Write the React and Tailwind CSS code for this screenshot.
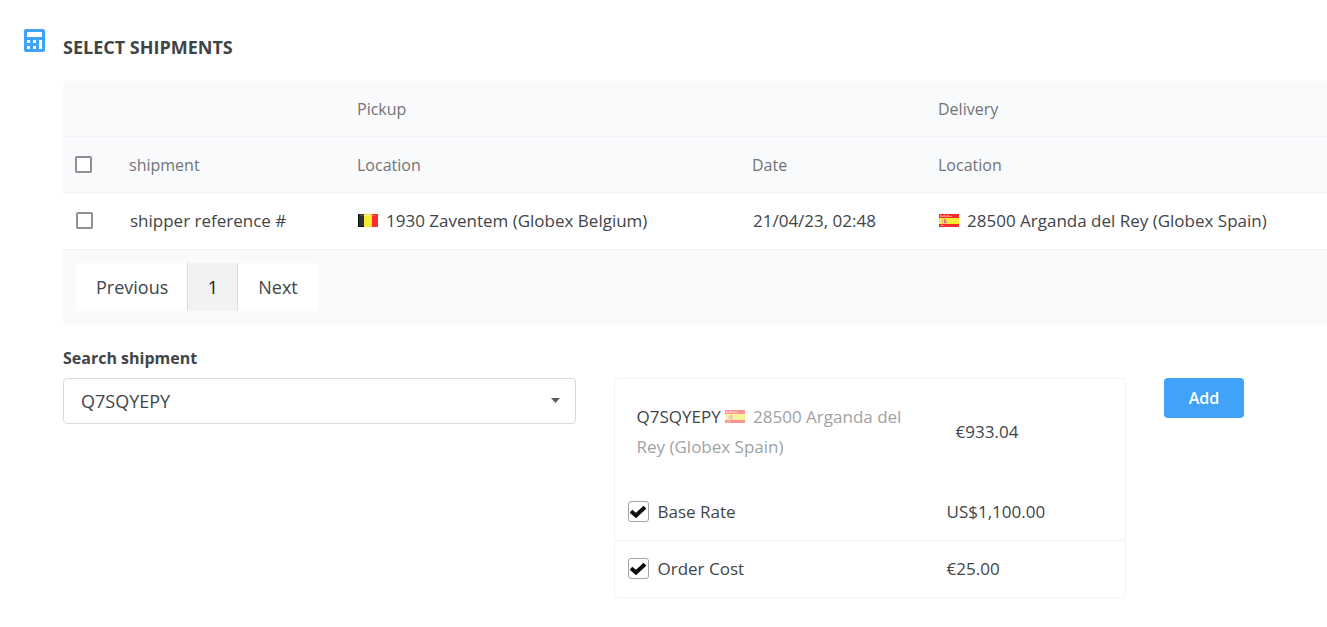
import React, { useState } from "react";

const shipments = [
  {
    id: 1,
    reference: "shipper reference #",
    pickup: { country: "BE", label: "1930 Zaventem (Globex Belgium)" },
    date: "21/04/23, 02:48",
    delivery: { country: "ES", label: "28500 Arganda del Rey (Globex Spain)" },
  },
];

const costs = [
  { id: "base-rate", label: "Base Rate", price: "US$1,100.00" },
  { id: "order-cost", label: "Order Cost", price: "€25.00" },
];

const CalculatorIcon = () => (
  <svg viewBox="0 0 21 23" className="w-[21px] h-[23px]" aria-hidden="true">
    <path
      fill="#40a2f8"
      fillRule="evenodd"
      d="M2 0h17a2 2 0 0 1 2 2v19a2 2 0 0 1-2 2H2a2 2 0 0 1-2-2V2a2 2 0 0 1 2-2ZM3 3v5h15V3ZM3 11v3h3v-3ZM9 11v3h3v-3ZM3 17v3h3v-3ZM9 17v3h3v-3ZM15 11v9h3v-9Z"
    />
  </svg>
);

const Flag = ({ country }) => {
  if (country === "BE") {
    return (
      <svg viewBox="0 0 20 13" className="inline-block align-baseline w-5 h-[13px] mr-2" role="img" aria-label="Belgium">
        <rect width="6" height="13" fill="#303030" />
        <path d="M0 0h1v13H0ZM0 12h6v1H0Z" fill="#0c0c0c" />
        <rect x="6" width="8" height="13" fill="#f5eb35" />
        <rect x="14" width="6" height="13" fill="#f92d2b" />
        <path d="M2 1h4v1H2Z" fill="#555" />
        <path d="M6 1h6v1H6Z" fill="#f8f291" />
        <path d="M14 1h3v1h-3Z" fill="#fb6a66" />
      </svg>
    );
  }
  return (
    <svg viewBox="0 0 20 13" className="inline-block align-baseline w-5 h-[13px] mr-2" role="img" aria-label="Spain">
      <rect width="20" height="13" fill="#f92d2b" />
      <rect y="4" width="20" height="6" fill="#f5eb35" />
      <path d="M1 1h2v1H1ZM4 1h3v1H4ZM8 1h2v1H8ZM1 2h12v1H1ZM2 11h3v1H2Z" fill="#fb8783" />
      <path d="M5 5h2v4H5Z" fill="#e8776f" />
      <path d="M3 6h1v3H3ZM7 7h1v2H7Z" fill="#d3ae9b" />
      <path d="M3 9h5v1H3Z" fill="#ecc05a" />
    </svg>
  );
};

const RowCheckbox = ({ label, checked, onChange }) => (
  <input
    type="checkbox"
    aria-label={label}
    checked={checked}
    onChange={onChange}
    className="block w-[17px] h-[17px] appearance-none rounded-[2px] border-2 border-[#8f8f94] bg-white checked:bg-[#40a2f8]"
  />
);

const App = () => {
  const [selected, setSelected] = useState([]);
  const [included, setIncluded] = useState(["base-rate", "order-cost"]);
  const [shipment, setShipment] = useState("Q7SQYEPY");

  const toggle = (list, id) =>
    list.includes(id) ? list.filter((i) => i !== id) : [...list, id];

  const allSelected = selected.length === shipments.length;

  return (
    <div className="flex pt-7 pl-6 font-['Open_Sans','Noto_Sans',sans-serif] text-[17px] text-[#414548]">
      <div className="w-[39px] shrink-0 pt-px">
        <CalculatorIcon />
      </div>

      <main className="flex-1 min-w-0">
        <h1 className="pt-[5px] mb-5 text-lg leading-7 font-bold text-[#3f4447]">SELECT SHIPMENTS</h1>

        {/* SHIPMENTS */}
        <div className="rounded-l bg-[#f9fafc] overflow-hidden">
          <table className="w-full table-fixed text-left">
            <colgroup>
              <col className="w-[54px]" />
              <col className="w-[228px]" />
              <col className="w-[395px]" />
              <col className="w-[186px]" />
              <col />
            </colgroup>
            <thead className="text-base text-[#727477]">
              <tr className="h-[55px] border-b border-[#f1f2f6]">
                <td colSpan={2} />
                <th colSpan={2} className="px-3 pt-0.5 font-normal">Pickup</th>
                <th className="px-3 pt-0.5 font-normal">Delivery</th>
              </tr>
              <tr className="h-14 border-b border-[#f1f2f6]">
                <td className="px-3">
                  <RowCheckbox
                    label="Select all shipments"
                    checked={allSelected}
                    onChange={() => setSelected(allSelected ? [] : shipments.map((s) => s.id))}
                  />
                </td>
                <th className="px-3 pt-0.5 font-normal">shipment</th>
                <th className="px-3 pt-0.5 font-normal">Location</th>
                <th className="px-3 pt-0.5 font-normal">Date</th>
                <th className="px-3 pt-0.5 font-normal">Location</th>
              </tr>
            </thead>
            <tbody>
              {shipments.map((s) => (
                <tr key={s.id} className="h-[57px] border-b border-[#f1f2f6] bg-white">
                  <td className="px-[13px]">
                    <RowCheckbox
                      label={`Select ${s.reference}`}
                      checked={selected.includes(s.id)}
                      onChange={() => setSelected(toggle(selected, s.id))}
                    />
                  </td>
                  <td className="px-[13px]">{s.reference}</td>
                  <td className="px-[13px] whitespace-nowrap">
                    <Flag country={s.pickup.country} />
                    {s.pickup.label}
                  </td>
                  <td className="px-[13px]">{s.date}</td>
                  <td className="px-[13px] whitespace-nowrap">
                    <Flag country={s.delivery.country} />
                    {s.delivery.label}
                  </td>
                </tr>
              ))}
            </tbody>
          </table>

          <nav className="flex py-[13px] pl-[13px] text-lg" aria-label="Pagination">
            <button className="h-12 pl-5 pr-[19px] rounded-l bg-white">Previous</button>
            <button className="h-12 w-[51px] border-x border-[#dcdde3] bg-[#f1f2f4] text-[#17191b]" aria-current="page">
              1
            </button>
            <button className="h-12 px-5 rounded-r bg-white">Next</button>
          </nav>
        </div>

        {/* SEARCH */}
        <div className="grid grid-cols-[1fr_1fr_80px] gap-x-[38px] items-start pr-[83px] pt-[22px]">
          <label htmlFor="shipment" className="col-span-3 mb-2 text-base leading-6 font-bold">
            Search shipment
          </label>

          <div className="relative">
            <select
              id="shipment"
              value={shipment}
              onChange={(e) => setShipment(e.target.value)}
              className="block w-full h-[46px] appearance-none rounded border border-[#dbdbdd] bg-white px-[17px] text-lg"
            >
              <option>Q7SQYEPY</option>
            </select>
            <svg viewBox="0 0 9 5" className="absolute right-4 top-5 w-[9px] h-[5px] pointer-events-none" aria-hidden="true">
              <path d="M0 0h9L4.500 5Z" fill="#5a5c5f" />
            </svg>
          </div>

          <div className="rounded border border-[#f3f3f4]">
            <table className="w-full table-fixed text-left">
              <colgroup>
                <col className="w-5/8" />
                <col />
              </colgroup>
              <tbody>
                <tr>
                  <td className="px-[22px] pt-[23px] pb-[22px] leading-[30px]">
                    {shipment}{" "}
                    <span className="opacity-50">
                      <Flag country="ES" />
                      28500 Arganda del Rey (Globex Spain)
                    </span>
                  </td>
                  <td className="px-[22px] pt-0.5">€933.04</td>
                </tr>
                {costs.map((cost) => (
                  <tr key={cost.id} className="h-[57px] border-b border-[#f3f3f4] last:h-14 last:border-b-0">
                    <td className="px-[13px]">
                      <label className="flex items-center gap-[9px]">
                        <span className="grid place-items-center">
                          <input
                            type="checkbox"
                            checked={included.includes(cost.id)}
                            onChange={() => setIncluded(toggle(included, cost.id))}
                            className="peer col-start-1 row-start-1 w-[21px] h-[21px] appearance-none rounded-[3px] border border-[#a4a4a6] bg-white"
                          />
                          <svg
                            viewBox="0 0 16 12"
                            className="col-start-1 row-start-1 w-4 h-3 pointer-events-none invisible peer-checked:visible"
                            aria-hidden="true"
                          >
                            <path d="M2.500 6.500L6 9.500L13.500 2.500" fill="none" stroke="#0d0d0f" strokeWidth="4" strokeLinecap="square" />
                          </svg>
                        </span>
                        {cost.label}
                      </label>
                    </td>
                    <td className="px-[13px]">{cost.price}</td>
                  </tr>
                ))}
              </tbody>
            </table>
          </div>

          <button className="h-10 rounded bg-[#40a2f8] text-base font-semibold text-white">Add</button>
        </div>
      </main>
    </div>
  );
};

export default App;
